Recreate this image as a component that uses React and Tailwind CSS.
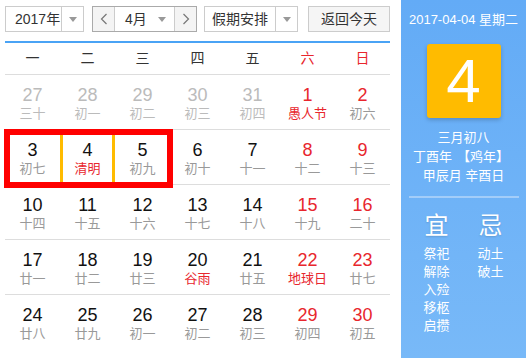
import React from "react";

const font = { fontFamily: '"Liberation Sans", "Noto Sans CJK SC", sans-serif' };

const Caret = () => (
  <span className="inline-block w-0 h-0 border-x-[4px] border-x-transparent border-t-[5px] border-t-[#999]" />
);

const Chevron = ({ dir }) => (
  <svg width="8" height="12" viewBox="0 0 8 12">
    <polyline
      points={dir === "left" ? "6.5,1 1.5,6 6.5,11" : "1.5,1 6.5,6 1.5,11"}
      fill="none"
      stroke="#777"
      strokeWidth="1.2"
    />
  </svg>
);

// [day, lunar, dayColor, lunarColor]
const rows = [
  [["27", "三十", "p", "p"], ["28", "初一", "p", "p"], ["29", "初二", "p", "p"], ["30", "初三", "p", "p"], ["31", "初四", "p", "p"], ["1", "愚人节", "r", "r"], ["2", "初六", "r", "n"]],
  [["3", "初七", "n", "n"], ["4", "清明", "n", "r"], ["5", "初九", "n", "n"], ["6", "初十", "n", "n"], ["7", "十一", "n", "n"], ["8", "十二", "r", "n"], ["9", "十三", "r", "n"]],
  [["10", "十四", "n", "n"], ["11", "十五", "n", "n"], ["12", "十六", "n", "n"], ["13", "十七", "n", "n"], ["14", "十八", "n", "n"], ["15", "十九", "r", "n"], ["16", "二十", "r", "n"]],
  [["17", "廿一", "n", "n"], ["18", "廿二", "n", "n"], ["19", "廿三", "n", "n"], ["20", "谷雨", "n", "r"], ["21", "廿五", "n", "n"], ["22", "地球日", "r", "r"], ["23", "廿七", "r", "n"]],
  [["24", "廿八", "n", "n"], ["25", "廿九", "n", "n"], ["26", "初一", "n", "n"], ["27", "初二", "n", "n"], ["28", "初三", "n", "n"], ["29", "初四", "r", "n"], ["30", "初五", "r", "n"]],
];

const dayColor = { p: "text-[#bbb]", n: "text-[#111]", r: "text-[#e8262d]" };
const lunarColor = { p: "text-[#bbb]", n: "text-[#999]", r: "text-[#e8262d]" };

const Cell = ({ d, today }) => (
  <div
    className={
      "h-full flex flex-col items-center pt-[10px] " +
      (today ? "border-x-[3px] border-[#ffbb00]" : "")
    }
  >
    <span className={"text-[18px] leading-[20px] " + dayColor[d[2]]}>{d[0]}</span>
    <span className={"text-[13px] leading-[18px] " + lunarColor[d[3]]}>{d[1]}</span>
  </div>
);

export default function App() {
  return (
    <div className="w-[526px] h-[358px] flex overflow-hidden bg-white" style={font}>
      <div className="w-[401px] pl-[5px] pr-[11px] relative">
        {/* toolbar */}
        <div className="flex items-center h-[26px] mt-[6px] text-[14px] text-[#333]">
          <div className="w-[79px] h-full flex border border-[#ccc]">
            <span className="w-[55px] pl-[9px] leading-[24px]">2017年</span>
            <span className="flex-1 border-l border-[#ccc] flex items-center justify-center"><Caret /></span>
          </div>
          <div className="ml-[8px] w-[105px] h-full flex border border-[#aaa]">
            <span className="w-[22px] bg-[#f4f4f4] border-r border-[#ccc] flex items-center justify-center"><Chevron dir="left" /></span>
            <span className="flex-1 flex items-center justify-between pl-[10px] pr-[8px]">
              <span className="leading-[24px]">4月</span>
              <Caret />
            </span>
            <span className="w-[22px] bg-[#f4f4f4] border-l border-[#ccc] flex items-center justify-center"><Chevron dir="right" /></span>
          </div>
          <div className="ml-[7px] w-[94px] h-full flex border border-[#ccc]">
            <span className="w-[70px] text-center leading-[24px]">假期安排</span>
            <span className="flex-1 border-l border-[#ccc] flex items-center justify-center"><Caret /></span>
          </div>
          <div className="ml-[10px] w-[82px] h-full border border-[#ccc] bg-[#f5f5f5] text-center leading-[24px]">返回今天</div>
        </div>

        {/* weekday header */}
        <div className="mt-[9px] border-t-2 border-[#4aa3f5] grid grid-cols-7 h-[34px] items-center border-b border-b-[#ddd] text-[14px]">
          {["一", "二", "三", "四", "五", "六", "日"].map((w, i) => (
            <span key={w} className={"text-center " + (i > 4 ? "text-[#e8262d]" : "text-[#333]")}>{w}</span>
          ))}
        </div>

        {/* day grid */}
        <div>
          {rows.map((r, ri) => (
            <div key={ri} className={"grid grid-cols-7 h-[55px] " + (ri < 4 ? "border-b border-[#ddd]" : "")}>
              {r.map((d, ci) => (
                <Cell key={ci} d={d} today={ri === 1 && ci === 1} />
              ))}
            </div>
          ))}
        </div>

        {/* highlight frame */}
        <div className="absolute left-[4px] top-[129px] w-[169px] h-[59px] border-[6px] border-[#ff0000] pointer-events-none" />
      </div>

      {/* side panel */}
      <div className="flex-1 bg-[linear-gradient(#63abf6,#78b9f8)] text-white flex flex-col items-center">
        <div className="mt-[12px] text-[13px] leading-[16px] whitespace-nowrap">2017-04-04 星期二</div>
        <div className="mt-[16px] w-[74px] h-[74px] shrink-0 rounded-[3px] bg-[#ffbb00] shadow-[0_2px_4px_rgba(0,0,0,0.2)] flex items-center justify-center text-[62px] font-light leading-none">4</div>
        <div className="mt-[10px] text-[13px] leading-[19px] text-center whitespace-nowrap">
          <div>三月初八</div>
          <div>丁酉年<span className="ml-[5px] mr-[5px]">【鸡年】</span></div>
          <div>甲辰月 辛酉日</div>
        </div>
        <div className="mt-[11px] w-[110px] h-[2px] shrink-0 bg-[#a3cdf9]" />
        <div className="mt-[14px] flex gap-[28px]">
          <div className="flex flex-col items-center w-[26px]">
            <span className="text-[24px] leading-[28px] [text-shadow:0_1px_2px_rgba(0,0,0,0.15)]">宜</span>
            <div className="mt-[5px] text-[13px] leading-[18px] flex flex-col items-center whitespace-nowrap">
              <span>祭祀</span>
              <span>解除</span>
              <span>入殓</span>
              <span>移柩</span>
              <span>启攒</span>
            </div>
          </div>
          <div className="flex flex-col items-center w-[26px]">
            <span className="text-[24px] leading-[28px] [text-shadow:0_1px_2px_rgba(0,0,0,0.15)]">忌</span>
            <div className="mt-[5px] text-[13px] leading-[18px] flex flex-col items-center whitespace-nowrap">
              <span>动土</span>
              <span>破土</span>
            </div>
          </div>
        </div>
      </div>
    </div>
  );
}
